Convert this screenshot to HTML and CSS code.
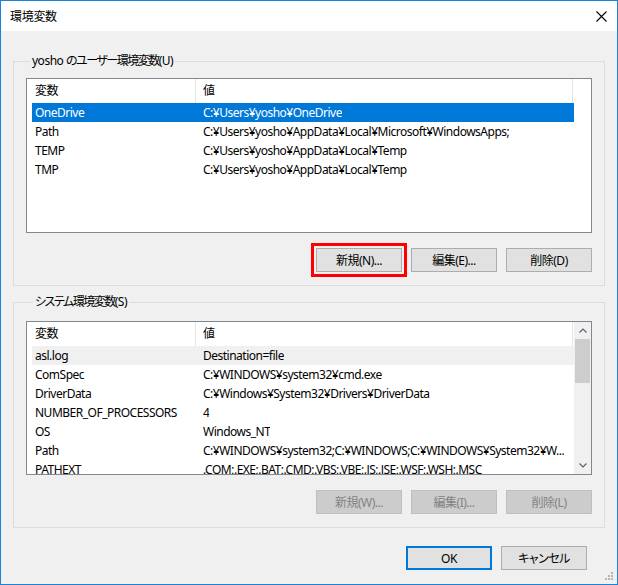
FILE: index.html
```html
<!DOCTYPE html>
<html>
<head>
    <title>環境変数</title>
    <meta charset="UTF-8">
    <link rel="stylesheet" href="styles.css">
</head>
<body>
    <div class="window">
        <div class="titlebar">
            <span class="title">環境変数</span>
            <svg class="close-icon" width="11" height="11" viewBox="0 0 11 11"><path d="M0.5 0.5 L10.5 10.5 M10.5 0.5 L0.5 10.5" stroke="#000" stroke-width="1.1" fill="none"/></svg>
        </div>

        <div class="content">
            <fieldset class="group" id="user-group">
                <legend>yosho <span class="ja">のユーザー環境変数</span>(U)</legend>
                <div class="listview">
                    <div class="lv-main">
                        <div class="lv-head">
                            <span class="col-name">変数</span>
                            <span class="col-value">値</span>
                        </div>
                        <div class="lv-body">
                            <div class="lv-row selected"><span class="col-name">OneDrive</span><span class="col-value">C:¥Users¥yosho¥OneDrive</span></div>
                            <div class="lv-row"><span class="col-name">Path</span><span class="col-value">C:¥Users¥yosho¥AppData¥Local¥Microsoft¥WindowsApps;</span></div>
                            <div class="lv-row"><span class="col-name">TEMP</span><span class="col-value">C:¥Users¥yosho¥AppData¥Local¥Temp</span></div>
                            <div class="lv-row"><span class="col-name">TMP</span><span class="col-value">C:¥Users¥yosho¥AppData¥Local¥Temp</span></div>
                        </div>
                    </div>
                </div>
                <div class="btn-row">
                    <button class="btn marked">新規(N)...</button>
                    <button class="btn">編集(E)...</button>
                    <button class="btn">削除(D)</button>
                </div>
            </fieldset>

            <fieldset class="group" id="system-group">
                <legend><span class="ja">システム環境変数</span>(S)</legend>
                <div class="listview">
                    <div class="lv-main">
                        <div class="lv-head">
                            <span class="col-name">変数</span>
                            <span class="col-value">値</span>
                        </div>
                        <div class="lv-body">
                            <div class="lv-row hot"><span class="col-name">asl.log</span><span class="col-value">Destination=file</span></div>
                            <div class="lv-row"><span class="col-name">ComSpec</span><span class="col-value">C:¥WINDOWS¥system32¥cmd.exe</span></div>
                            <div class="lv-row"><span class="col-name">DriverData</span><span class="col-value">C:¥Windows¥System32¥Drivers¥DriverData</span></div>
                            <div class="lv-row"><span class="col-name">NUMBER_OF_PROCESSORS</span><span class="col-value">4</span></div>
                            <div class="lv-row"><span class="col-name">OS</span><span class="col-value">Windows_NT</span></div>
                            <div class="lv-row"><span class="col-name">Path</span><span class="col-value">C:¥WINDOWS¥system32;C:¥WINDOWS;C:¥WINDOWS¥System32¥W...</span></div>
                            <div class="lv-row"><span class="col-name">PATHEXT</span><span class="col-value">.COM;.EXE;.BAT;.CMD;.VBS;.VBE;.JS;.JSE;.WSF;.WSH;.MSC</span></div>
                        </div>
                    </div>
                    <div class="scrollbar">
                        <div class="sb-arrow"><svg width="8" height="5" viewBox="0 0 8 5"><path d="M0.5 4.5 L4 1 L7.5 4.5" stroke="#606060" stroke-width="1.2" fill="none"/></svg></div>
                        <div class="sb-thumb"></div>
                        <div class="sb-track"></div>
                        <div class="sb-arrow"><svg width="8" height="5" viewBox="0 0 8 5"><path d="M0.5 0.5 L4 4 L7.5 0.5" stroke="#606060" stroke-width="1.2" fill="none"/></svg></div>
                    </div>
                </div>
                <div class="btn-row">
                    <button class="btn" disabled>新規(W)...</button>
                    <button class="btn" disabled>編集(I)...</button>
                    <button class="btn" disabled>削除(L)</button>
                </div>
            </fieldset>

            <div class="dialog-buttons">
                <button class="btn default">OK</button>
                <button class="btn">キャンセル</button>
            </div>
        </div>

        <svg class="grip" width="9" height="9" viewBox="0 0 9 9">
            <rect x="6" y="0" width="2" height="2" fill="#b4b4b4"/>
            <rect x="3" y="3" width="2" height="2" fill="#b4b4b4"/>
            <rect x="6" y="3" width="2" height="2" fill="#b4b4b4"/>
            <rect x="0" y="6" width="2" height="2" fill="#b4b4b4"/>
            <rect x="3" y="6" width="2" height="2" fill="#b4b4b4"/>
            <rect x="6" y="6" width="2" height="2" fill="#b4b4b4"/>
        </svg>
    </div>
</body>
</html>
```

FILE: styles.css
```css
/* Windows 10 "environment variables" dialog */
body { margin: 0; font-family: "Noto Sans", "Noto Sans CJK JP", sans-serif; font-size: 12px; letter-spacing: -0.5px; font-feature-settings: "palt"; color: #000; }
.window { position: relative; width: 618px; height: 585px; box-sizing: border-box; border: 1px solid #1883d7; background-color: #f0f0f0; display: flex; flex-direction: column; }

.titlebar { height: 30px; background-color: #fff; display: flex; align-items: center; justify-content: space-between; padding: 0 10px 0 9px; flex-shrink: 0; }
.title { font-size: 12px; letter-spacing: -0.3px; }
.close-icon { display: block; }

.content { padding: 22px 12px 0 12px; display: flex; flex-direction: column; }

.group { margin: 0; border: 1px solid #dcdcdc; padding: 9px 12px 13px 12px; min-width: 0; }
.group legend { padding: 0 2px; margin-left: 4px; line-height: 16px; }
.group legend .ja { letter-spacing: -1.5px; }
#system-group { margin-top: 8px; padding-top: 11px; }
#system-group legend { margin-left: 7px; }

.listview { height: 155px; box-sizing: border-box; border: 1px solid #828790; background-color: #fff; display: flex; overflow: hidden; }
#system-group .listview { height: 154px; }
.lv-main { flex-grow: 1; min-width: 0; overflow: hidden; }
.lv-head { height: 24px; display: flex; align-items: center; }
.lv-head .col-name { width: 160px; padding-left: 8px; border-right: 1px solid #e5e5e5; height: 24px; line-height: 24px; }
.lv-head .col-value { width: 369px; padding-left: 7px; border-right: 1px solid #e5e5e5; height: 24px; line-height: 24px; }
.lv-row { height: 19px; line-height: 19px; margin-left: 5px; width: 542px; display: flex; white-space: nowrap; }
.lv-row .col-name { width: 161px; padding-left: 3px; flex-shrink: 0; }
.lv-row .col-value { padding-left: 7px; overflow: hidden; }
.lv-row.selected { background-color: #0078d7; color: #fff; }
.lv-row.hot { background-color: #f0f0f0; }

.scrollbar { width: 17px; flex-shrink: 0; background-color: #f0f0f0; display: flex; flex-direction: column; }
.sb-arrow { height: 17px; display: flex; align-items: center; justify-content: center; }
.sb-thumb { height: 44px; margin: 0 1px; background-color: #cdcdcd; }
.sb-track { flex-grow: 1; }

.btn-row { display: flex; justify-content: flex-end; gap: 9px; margin-top: 15px; }
.btn { width: 86px; height: 24px; padding: 0; font-family: inherit; font-size: 12px; letter-spacing: inherit; font-feature-settings: inherit; color: #000; background-color: #e1e1e1; border: 1px solid #adadad; }
.btn:disabled { background-color: #cccccc; border-color: #bfbfbf; color: #838383; }
.btn.marked { outline: 3px solid #ff0000; outline-offset: 2px; }
.btn.default { border: 2px solid #0078d7; }

.dialog-buttons { display: flex; justify-content: flex-end; gap: 9px; margin-top: 18px; padding-right: 18px; }

.grip { position: absolute; right: 3px; bottom: 3px; }
```
